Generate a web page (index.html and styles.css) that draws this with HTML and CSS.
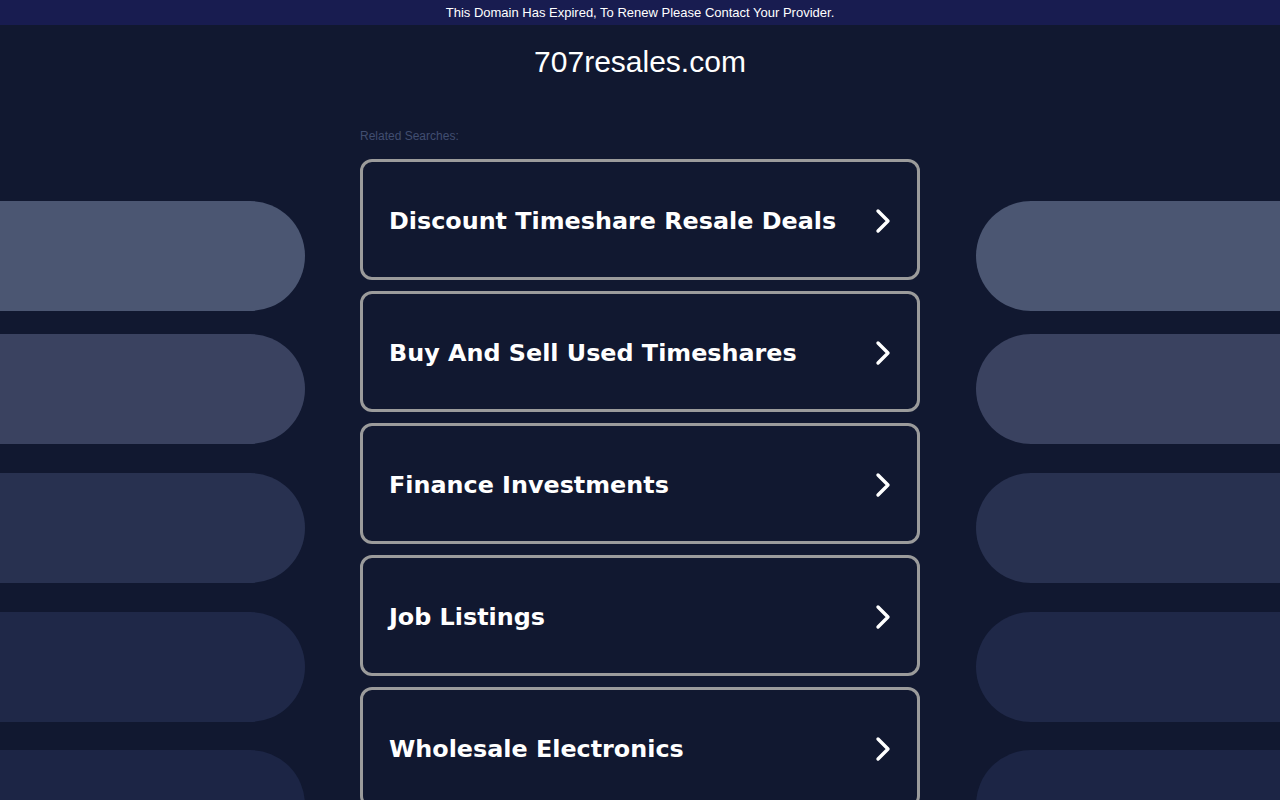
FILE: index.html
```html
<!DOCTYPE html>
<html>
<head>
<meta charset="utf-8">
<title>707resales.com</title>
<link rel="stylesheet" href="styles.css">
</head>
<body>
<div class="deco" aria-hidden="true">
  <div class="deco-col deco-left">
    <div class="pill p1"></div>
    <div class="pill p2"></div>
    <div class="pill p3"></div>
    <div class="pill p4"></div>
    <div class="pill p5"></div>
  </div>
  <div class="deco-col deco-right">
    <div class="pill p1"></div>
    <div class="pill p2"></div>
    <div class="pill p3"></div>
    <div class="pill p4"></div>
    <div class="pill p5"></div>
  </div>
</div>
<div class="topbar">This Domain Has Expired, To Renew Please Contact Your Provider.</div>
<h1 class="domain">707resales.com</h1>
<main class="content">
  <div class="related">Related Searches:</div>
  <ul class="links">
    <li><a class="card" href="#"><span>Discount Timeshare Resale Deals</span><svg class="chev" viewBox="0 0 16 26"><path d="M3 3 L13 13 L3 23"/></svg></a></li>
    <li><a class="card" href="#"><span>Buy And Sell Used Timeshares</span><svg class="chev" viewBox="0 0 16 26"><path d="M3 3 L13 13 L3 23"/></svg></a></li>
    <li><a class="card" href="#"><span>Finance Investments</span><svg class="chev" viewBox="0 0 16 26"><path d="M3 3 L13 13 L3 23"/></svg></a></li>
    <li><a class="card" href="#"><span>Job Listings</span><svg class="chev" viewBox="0 0 16 26"><path d="M3 3 L13 13 L3 23"/></svg></a></li>
    <li><a class="card" href="#"><span>Wholesale Electronics</span><svg class="chev" viewBox="0 0 16 26"><path d="M3 3 L13 13 L3 23"/></svg></a></li>
  </ul>
</main>
</body>
</html>
```

FILE: styles.css
```css
html, body {
  margin: 0;
  padding: 0;
  background: #111830;
  height: 100%;
  overflow: hidden;
}
body {
  font-family: "Liberation Sans", Arial, sans-serif;
  position: relative;
}
.deco {
  position: absolute;
  inset: 0;
  z-index: 0;
}
.deco-col {
  position: absolute;
  top: 201px;
  width: 305px;
  display: flex;
  flex-direction: column;
}
.deco-left { left: 0; }
.deco-right { right: 0; width: 304px; }
.pill {
  height: 110px;
  flex: none;
}
.deco-left .pill { border-radius: 0 55px 55px 0; }
.deco-right .pill { border-radius: 55px 0 0 55px; }
.p1 { background: #4b5672; }
.p2 { background: #3a4260; margin-top: 23px; }
.p3 { background: #283150; margin-top: 29px; }
.p4 { background: #1f2848; margin-top: 29px; }
.p5 { background: #1c2545; margin-top: 28px; }

.topbar {
  position: relative;
  z-index: 1;
  height: 25px;
  line-height: 25px;
  background: #181c50;
  color: #ffffff;
  font-size: 13px;
  text-align: center;
}
.domain {
  position: relative;
  z-index: 1;
  margin: 19px 0 0;
  font-weight: normal;
  font-size: 30px;
  line-height: 36px;
  color: #ffffff;
  text-align: center;
}
.content {
  position: relative;
  z-index: 1;
  width: 560px;
  margin: 0 auto;
  padding-top: 49px;
}
.related {
  font-size: 12px;
  line-height: 14px;
  color: #414e70;
}
.links {
  list-style: none;
  margin: 16px 0 0;
  padding: 0;
  display: flex;
  flex-direction: column;
  gap: 11px;
}
.card {
  display: flex;
  align-items: center;
  justify-content: space-between;
  box-sizing: border-box;
  height: 121px;
  border: 3px solid #9b9b9b;
  border-radius: 12px;
  padding: 2px 26px 0 26px;
  background: #111830;
  color: #ffffff;
  text-decoration: none;
  font-family: "DejaVu Sans", Verdana, sans-serif;
  font-weight: bold;
  font-size: 23.85px;
}
.chev {
  width: 16px;
  height: 26px;
  fill: none;
  stroke: #ffffff;
  stroke-width: 3.4;
  stroke-linecap: round;
  stroke-linejoin: round;
}
```
